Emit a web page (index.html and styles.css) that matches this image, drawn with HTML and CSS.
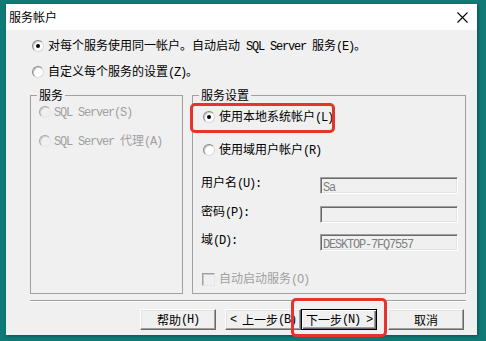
FILE: index.html
```html
<!DOCTYPE html>
<html lang="zh-CN">
<head>
<meta charset="utf-8">
<title>服务帐户</title>
<link rel="stylesheet" href="styles.css">
</head>
<body>
<div class="window">
  <div class="titlebar">
    <span class="title">服务帐户</span>
    <svg class="close" width="11" height="11" viewBox="0 0 11 11"><path d="M0.5 0.5 L10.5 10.5 M10.5 0.5 L0.5 10.5" stroke="#000" stroke-width="1.1" fill="none"/></svg>
  </div>
  <div class="content">
    <div class="opt">
      <span class="radio checked"></span>
      <span class="label">对每个服务使用同一帐户。自动启动<span class="a"> SQL Server </span>服务<span class="a">(E)</span>。</span>
    </div>
    <div class="opt">
      <span class="radio"></span>
      <span class="label">自定义每个服务的设置<span class="a">(Z)</span>。</span>
    </div>
    <div class="groups">
      <fieldset class="group group-left">
        <legend>服务</legend>
        <div class="opt sub dis first-l">
          <span class="radio disabled"></span>
          <span class="label"><span class="a">SQL Server(S)</span></span>
        </div>
        <div class="opt sub dis second-l">
          <span class="radio disabled"></span>
          <span class="label"><span class="a">SQL Server </span>代理<span class="a">(A)</span></span>
        </div>
      </fieldset>
      <fieldset class="group group-right">
        <legend>服务设置</legend>
        <div class="opt sub first-r">
          <span class="radio checked"></span>
          <span class="label">使用本地系统帐户<span class="a">(L)</span></span>
        </div>
        <div class="opt sub second-r">
          <span class="radio"></span>
          <span class="label">使用域用户帐户<span class="a">(R)</span></span>
        </div>
        <div class="frow r1">
          <span class="flabel">用户名<span class="a">(U):</span></span>
          <span class="field"><span class="a">Sa</span></span>
        </div>
        <div class="frow r2">
          <span class="flabel">密码<span class="a">(P):</span></span>
          <span class="field"></span>
        </div>
        <div class="frow r3">
          <span class="flabel">域<span class="a">(D):</span></span>
          <span class="field"><span class="a">DESKTOP-7FQ7557</span></span>
        </div>
        <div class="opt chk dis">
          <span class="checkbox"></span>
          <span class="label">自动启动服务<span class="a">(O)</span></span>
        </div>
      </fieldset>
    </div>
    <div class="sep"></div>
    <div class="buttons">
      <span class="btn help">帮助<span class="a">(H)</span></span>
      <span class="btn back"><span class="a">&lt; </span>上一步<span class="a">(B)</span></span>
      <span class="btn next default">下一步<span class="a">(N) &gt;</span></span>
      <span class="btn cancel">取消</span>
    </div>
  </div>
  <div class="mark mark-local"></div>
  <div class="mark mark-next"></div>
</div>
</body>
</html>
```

FILE: styles.css
```css
html, body {
  margin: 0;
  padding: 0;
}
body {
  width: 486px;
  height: 341px;
  overflow: hidden;
  background: #0f7a76;
  font-family: "Noto Sans CJK SC", "Noto Sans", sans-serif;
  font-size: 12px;
  line-height: 14px;
  color: #000;
}
.window {
  position: relative;
  margin: 4px 0 0 6px;
  width: 471px;
  height: 331px;
  background: #f0f0f0;
  box-shadow: 1px 1px 3px rgba(0, 0, 0, 0.35);
}
.titlebar {
  height: 26px;
  background: #fff;
  display: flex;
  align-items: center;
  justify-content: space-between;
  padding: 0 9px 0 3px;
}
.title {
  font-size: 12px;
  line-height: 14px;
}
.close {
  display: block;
}
.a {
  font-family: "Liberation Mono", monospace;
  font-size: 12px;
  letter-spacing: -1.2px;
  white-space: pre;
}
.content {
  padding: 8px 11px 0 24px;
}
.opt {
  display: flex;
  align-items: center;
  height: 16px;
  margin-left: 2px;
  white-space: nowrap;
}
.opt + .opt {
  margin-top: 10px;
}
.label {
  margin-left: 4px;
}
.radio {
  flex: none;
  position: relative;
  width: 12px;
  height: 12px;
  box-sizing: border-box;
  border-radius: 50%;
  border: 1px solid #8a8a8a;
  border-right-color: #d8d8d8;
  border-bottom-color: #d8d8d8;
  background: #fff;
  box-shadow: inset 1px 1px 0 #c8c8c8;
}
.radio.checked::after {
  content: "";
  position: absolute;
  left: 3px;
  top: 3px;
  width: 4px;
  height: 4px;
  border-radius: 50%;
  background: #000;
}
.radio.disabled {
  background: #f0f0f0;
  border-color: #a8a8a8 #e6e6e6 #e6e6e6 #a8a8a8;
  box-shadow: inset 1px 1px 0 #d0d0d0;
}
.dis .label {
  color: #a0a0a0;
}
.groups {
  display: flex;
  gap: 9px;
  margin-top: 8px;
  height: 206px;
}
.group {
  margin: 0;
  padding: 0;
  min-width: 0;
  box-sizing: border-box;
  border: 1px solid #a0a0a0;
}
.group-left {
  width: 153px;
}
.group-right {
  width: 274px;
}
legend {
  margin-left: 6px;
  padding: 0 2px;
  font-size: 12px;
  line-height: 14px;
}
.opt.sub.first-l {
  margin: 2px 0 0 8px;
}
.opt.sub.second-l {
  margin: 13px 0 0 8px;
}
.opt.sub .label {
  margin-left: 3px;
}
.opt.sub.first-r {
  margin: 7px 0 0 10px;
}
.opt.sub.second-r {
  margin: 17px 0 0 10px;
}
.opt.sub.first-r .label,
.opt.sub.second-r .label {
  margin-left: 4px;
}
.frow {
  display: flex;
  align-items: flex-start;
  margin-left: 8px;
  height: 19px;
}
.frow.r1 {
  margin-top: 17px;
}
.frow.r2 {
  margin-top: 10px;
}
.frow.r3 {
  margin-top: 9px;
}
.flabel {
  width: 119px;
  flex: none;
}
.field {
  margin-top: 2px;
  width: 138px;
  height: 17px;
  box-sizing: border-box;
  border: 1px solid;
  border-color: #a0a0a0 #fff #fff #a0a0a0;
  box-shadow: inset 1px 1px 0 #696969, inset -1px -1px 0 #e3e3e3;
  background: #f0f0f0;
  padding: 0 0 0 2px;
  line-height: 15px;
  color: #808080;
  overflow: hidden;
}
.opt.chk {
  margin: 20px 0 0 9px;
}
.checkbox {
  flex: none;
  width: 13px;
  height: 13px;
  box-sizing: border-box;
  border: 1px solid;
  border-color: #a0a0a0 #e6e6e6 #e6e6e6 #a0a0a0;
  box-shadow: inset 1px 1px 0 #c8c8c8;
  background: #f0f0f0;
}
.opt.chk .label {
  margin-left: 4px;
}
.sep {
  margin-top: 6px;
  height: 0;
  border-top: 1px solid #a0a0a0;
  border-bottom: 1px solid #fff;
}
.buttons {
  display: flex;
  margin-top: 7px;
}
.btn {
  width: 76px;
  height: 21px;
  box-sizing: border-box;
  display: flex;
  align-items: center;
  justify-content: center;
  white-space: nowrap;
  background: #f0f0f0;
  border: 1px solid;
  border-color: #fff #696969 #696969 #fff;
  box-shadow: inset -1px -1px 0 #a0a0a0, inset 1px 1px 0 #e3e3e3;
}
.btn.help {
  margin-left: 110px;
}
.btn.back {
  margin-left: 9px;
}
.btn.next {
  margin-left: 0;
}
.btn.default {
  border-color: #000;
  box-shadow: inset 1px 1px 0 #fff, inset -1px -1px 0 #696969, inset -2px -2px 0 #a0a0a0;
}
.btn.cancel {
  margin-left: 11px;
}
.mark {
  position: absolute;
  box-sizing: border-box;
  border: 3px solid #e8332c;
  border-radius: 5px;
}
.mark-local {
  left: 184px;
  top: 99px;
  width: 145px;
  height: 30px;
}
.mark-next {
  left: 285px;
  top: 294px;
  width: 96px;
  height: 39px;
}
```
